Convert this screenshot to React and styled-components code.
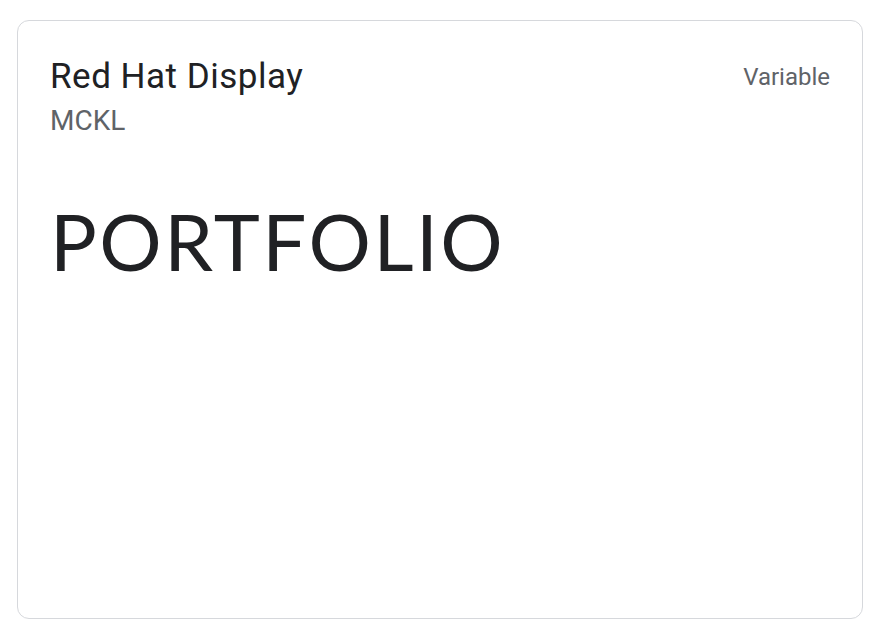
import React from 'react'
import styled, { createGlobalStyle } from 'styled-components'

const GlobalStyle = createGlobalStyle`
    html, body {
        margin: 0;
        padding: 0;
        background: #ffffff;
    }
    body {
        font-family: Roboto, "Liberation Sans", sans-serif;
        color: #202124;
    }
`;

function App() {
    return (
        <Page>
            <GlobalStyle />
            <Card>
                <Header>
                    <div>
                        <FamilyName>Red Hat Display</FamilyName>
                        <Foundry>MCKL</Foundry>
                    </div>
                    <Tag>Variable</Tag>
                </Header>
                <Sample>PORTFOLIO</Sample>
            </Card>
        </Page>
    )
}

const Page = styled.div`
    width: 886px;
    height: 636px;
    box-sizing: border-box;
    padding: 20px 23px 17px 17px;
`;

const Card = styled.div`
    box-sizing: border-box;
    width: 846px;
    height: 599px;
    border: 1.5px solid #d6d8dc;
    border-radius: 12px;
    padding: 34px 32px 0 32px;
`;

const Header = styled.div`
    display: flex;
    justify-content: space-between;
    align-items: flex-start;
`;

const FamilyName = styled.div`
    font-size: 35px;
    line-height: 44px;
    color: #202124;
    letter-spacing: 0.5px;
`;

const Foundry = styled.div`
    font-size: 28px;
    line-height: 32px;
    margin-top: 6px;
    color: #5f6368;
`;

const Tag = styled.div`
    font-size: 24px;
    line-height: 32px;
    color: #5f6368;
    margin-top: 6px;
`;

const Sample = styled.div`
    margin-top: 54px;
    font-family: Lato, "Open Sans", sans-serif;
    font-size: 78px;
    line-height: 100px;
    letter-spacing: 2.5px;
    color: #202124;
`;

export default App
